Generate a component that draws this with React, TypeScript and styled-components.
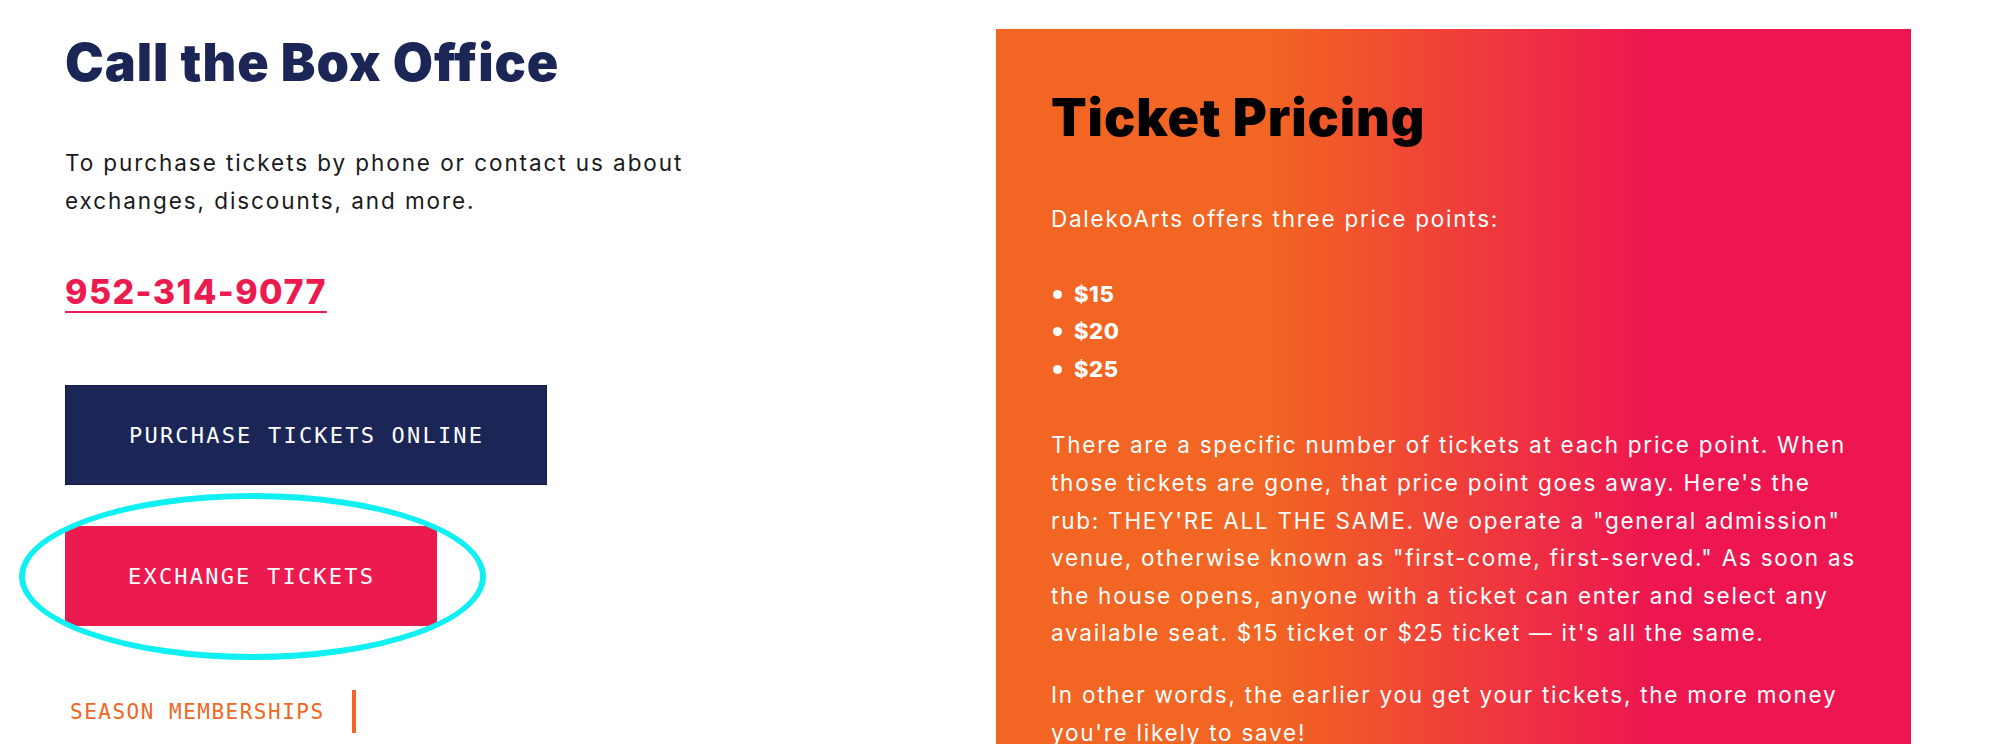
import styled, { createGlobalStyle, css } from 'styled-components';

const GlobalStyle = createGlobalStyle`
  html, body {
    margin: 0;
    padding: 0;
    background: #ffffff;
  }
  * {
    box-sizing: border-box;
  }
`;

const navy = '#1c2656';
const crimson = '#ec1a4f';
const orange = '#f26522';

const Page = styled.main`
  display: flex;
  justify-content: space-between;
  align-items: flex-start;
  height: 744px;
  overflow: hidden;
  padding: 0 89px 0 65px;
  font-family: Inter, 'Liberation Sans', sans-serif;
`;

const Contact = styled.section`
  display: flex;
  flex-direction: column;
  align-items: flex-start;
  padding-top: 32px;
`;

const Heading = styled.h2<{ $tone: 'navy' | 'black' }>`
  margin: 0;
  font-size: 52px;
  line-height: 62px;
  font-weight: 900;
  letter-spacing: 0.9px;
  color: ${(p) => (p.$tone === 'navy' ? navy : '#000000')};
`;

const Lead = styled.p`
  width: 690px;
  margin: 50px 0 0;
  font-size: 22.5px;
  line-height: 37.6px;
  letter-spacing: 1.92px;
  color: #1a1a1a;
`;

const Phone = styled.a`
  margin-top: 52px;
  font-size: 34px;
  line-height: 41px;
  font-weight: 800;
  letter-spacing: 1.4px;
  color: ${crimson};
  text-decoration: underline;
  text-decoration-thickness: 2px;
  text-underline-offset: 7px;
`;

const ActionButton = styled.a<{ $variant: 'navy' | 'crimson' }>`
  display: flex;
  align-items: center;
  height: 100px;
  padding: 0 62px 0 63px;
  font-family: 'DejaVu Sans Mono', 'Liberation Mono', monospace;
  font-size: 22px;
  letter-spacing: 2.2px;
  color: #ffffff;
  text-transform: uppercase;
  ${(p) =>
    p.$variant === 'navy'
      ? css`
          margin-top: 73px;
          background: ${navy};
          border: 1px solid #141c40;
        `
      : css`
          background: ${crimson};
          border-radius: 4px;
        `}
`;

const Highlighted = styled.div`
  position: relative;
  margin-top: 41px;
`;

const Circle = styled.span`
  position: absolute;
  left: -46px;
  top: -33px;
  width: 467px;
  height: 167px;
  border: 6px solid #10f0f2;
  border-radius: 50%;
  pointer-events: none;
`;

const Membership = styled.a`
  display: flex;
  align-items: center;
  gap: 27px;
  margin-top: 64px;
  padding-left: 5px;
  font-family: 'DejaVu Sans Mono', 'Liberation Mono', monospace;
  font-size: 21px;
  letter-spacing: 1.5px;
  text-transform: uppercase;
  color: ${orange};

  &::after {
    content: '';
    width: 4px;
    height: 43px;
    background: ${orange};
  }
`;

const Pricing = styled.section`
  width: 915px;
  min-height: 760px;
  margin-top: 29px;
  padding: 58px 55px 60px;
  background: linear-gradient(90deg, ${orange} 30%, #ed1651 72%);
  color: #ffffff;
`;

const Copy = styled.p<{ $gap?: number }>`
  margin: ${(p) => p.$gap ?? 0}px 0 0;
  font-size: 22.5px;
  line-height: 37.6px;
  letter-spacing: 1.75px;
`;

const Prices = styled.ul`
  margin: 38px 0 0;
  padding: 0;
  list-style: none;
`;

const Price = styled.li`
  display: flex;
  align-items: center;
  gap: 12px;
  font-size: 22px;
  line-height: 37.6px;
  font-weight: 800;
  letter-spacing: 0.6px;

  &::before {
    content: '';
    width: 9px;
    height: 9px;
    margin-left: 2px;
    border-radius: 50%;
    background: #ffffff;
  }
`;

const prices = ['$15', '$20', '$25'];

const App = () => {
  return (
    <>
      <GlobalStyle />
      <Page>
        <Contact>
          <Heading $tone="navy">Call the Box Office</Heading>
          <Lead>
            To purchase tickets by phone or contact us about exchanges,
            discounts, and more.
          </Lead>
          <Phone>952-314-9077</Phone>
          <ActionButton $variant="navy">Purchase Tickets Online</ActionButton>
          <Highlighted>
            <ActionButton $variant="crimson">Exchange Tickets</ActionButton>
            <Circle />
          </Highlighted>
          <Membership>Season Memberships</Membership>
        </Contact>

        <Pricing>
          <Heading $tone="black">Ticket Pricing</Heading>
          <Copy $gap={51}>DalekoArts offers three price points:</Copy>
          <Prices>
            {prices.map((price) => (
              <Price key={price}>{price}</Price>
            ))}
          </Prices>
          <Copy $gap={38}>
            There are a specific number of tickets at each price point. When
            those tickets are gone, that price point goes away. Here's the rub:
            THEY'RE ALL THE SAME. We operate a "general admission" venue,
            otherwise known as "first-come, first-served." As soon as the house
            opens, anyone with a ticket can enter and select any available
            seat. $15 ticket or $25 ticket — it's all the same.
          </Copy>
          <Copy $gap={24}>
            In other words, the earlier you get your tickets, the more money
            you're likely to save!
          </Copy>
        </Pricing>
      </Page>
    </>
  );
};

export default App;
